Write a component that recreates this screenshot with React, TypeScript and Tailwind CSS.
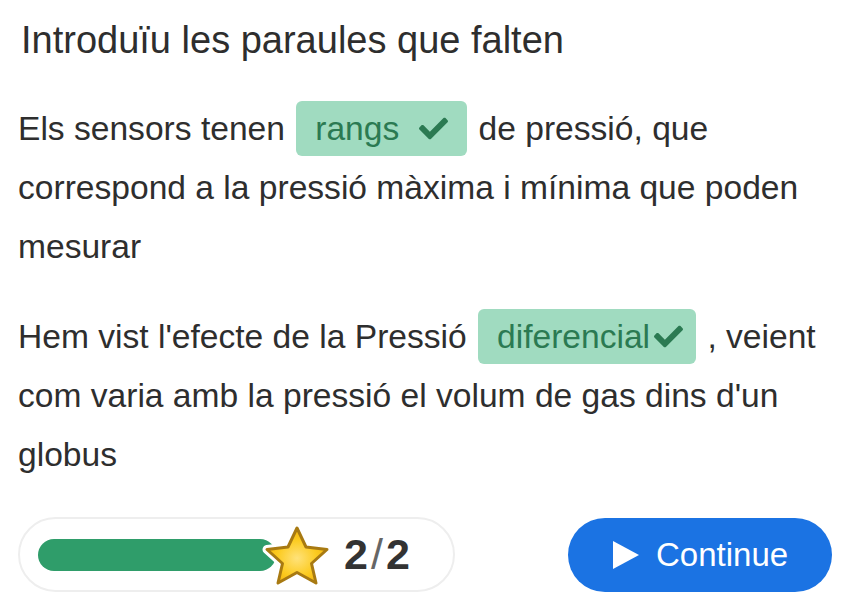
import React from "react";

const font = { fontFamily: '"Liberation Sans", Arial, sans-serif' };

const Check = () => (
  <svg viewBox="0 0 512 512" className="w-[29px] h-[29px] shrink-0" fill="#2b7a52">
    <path d="M173.9 439.4 7.5 273c-10-10-10-26.2 0-36.2l36.2-36.2c10-10 26.2-10 36.2 0L192 312.7 432.1 72.6c10-10 26.2-10 36.2 0l36.2 36.2c10 10 10 26.2 0 36.2L210.1 439.4c-10 10-26.2 10-36.2 0z" />
  </svg>
);

const Chip = ({ word, spaced }: { word: string; spaced?: boolean }) => (
  <span
    className={
      "inline-flex items-center align-baseline leading-none h-[55px] rounded-md bg-[#a0dbc0] text-[#2b7a52] pl-[19px] mx-[2px] " +
      (spaced ? "pr-[19px] gap-[20px]" : "pr-[13px] gap-[4px]")
    }
  >
    <span>{word}</span>
    <Check />
  </span>
);

const Star = () => (
  <svg viewBox="0 0 70 64" className="absolute left-[242px] top-[4px] w-[70px] h-[64px]">
    <defs>
      <radialGradient id="sg" cx="50%" cy="55%" r="55%">
        <stop offset="0%" stopColor="#ffe27a" />
        <stop offset="60%" stopColor="#fccb20" />
        <stop offset="100%" stopColor="#f2b30c" />
      </radialGradient>
    </defs>
    <path
      d="M35 5 L44 24 L65 26.5 L49.5 40.5 L54 60 L35 49.5 L16 60 L20.5 40.5 L5 26.5 L26 24 Z"
      fill="none"
      stroke="#ffffff"
      strokeWidth="9"
      strokeLinejoin="round"
    />
    <path
      d="M35 5 L44 24 L65 26.5 L49.5 40.5 L54 60 L35 49.5 L16 60 L20.5 40.5 L5 26.5 L26 24 Z"
      fill="url(#sg)"
      stroke="#a87a12"
      strokeWidth="3"
      strokeLinejoin="round"
    />
  </svg>
);

export default function App() {
  return (
    <div className="w-[848px] h-[608px] bg-white text-[#2e2e2e] overflow-hidden" style={font}>
      <div className="flex flex-col pl-[18px] pr-[20px] pt-[16px]">
        <h1 className="text-[38px] leading-[48px] pl-[3px]">Introduïu les paraules que falten</h1>

        <p className="text-[33.6px] leading-[59px] mt-[35px]">
          Els sensors tenen <Chip word="rangs" spaced /> de pressió, que correspond a la pressió
          màxima i mínima que poden mesurar
        </p>

        <p className="text-[33.6px] leading-[59px] mt-[31px]">
          Hem vist l'efecte de la Pressió <Chip word="diferencial" /> , veient com varia amb la pressió
          el volum de gas dins d'un globus
        </p>

        <div className="flex items-center justify-between mt-[33px]">
          <div className="relative flex items-center w-[437px] h-[75px] rounded-full border-2 border-[#eeeeee] bg-white pl-[18px]">
            <div className="w-[238px] h-[32px] rounded-full bg-[#2f9d6a]" />
            <Star />
            <div className="ml-[68px] text-[43px] font-bold text-[#333333] leading-none tracking-[3px]">
              2<span className="text-[#666666] font-normal">/</span>2
            </div>
          </div>

          <button className="flex items-center gap-[16px] h-[74px] w-[264px] rounded-full bg-[#1b73e3] text-white text-[33px] pl-[44px] mr-[-4px]">
            <svg viewBox="0 0 28 30" className="w-[28px] h-[30px]">
              <path d="M1 1 L27 15 L1 29 Z" fill="#ffffff" />
            </svg>
            <span>Continue</span>
          </button>
        </div>
      </div>
    </div>
  );
}
